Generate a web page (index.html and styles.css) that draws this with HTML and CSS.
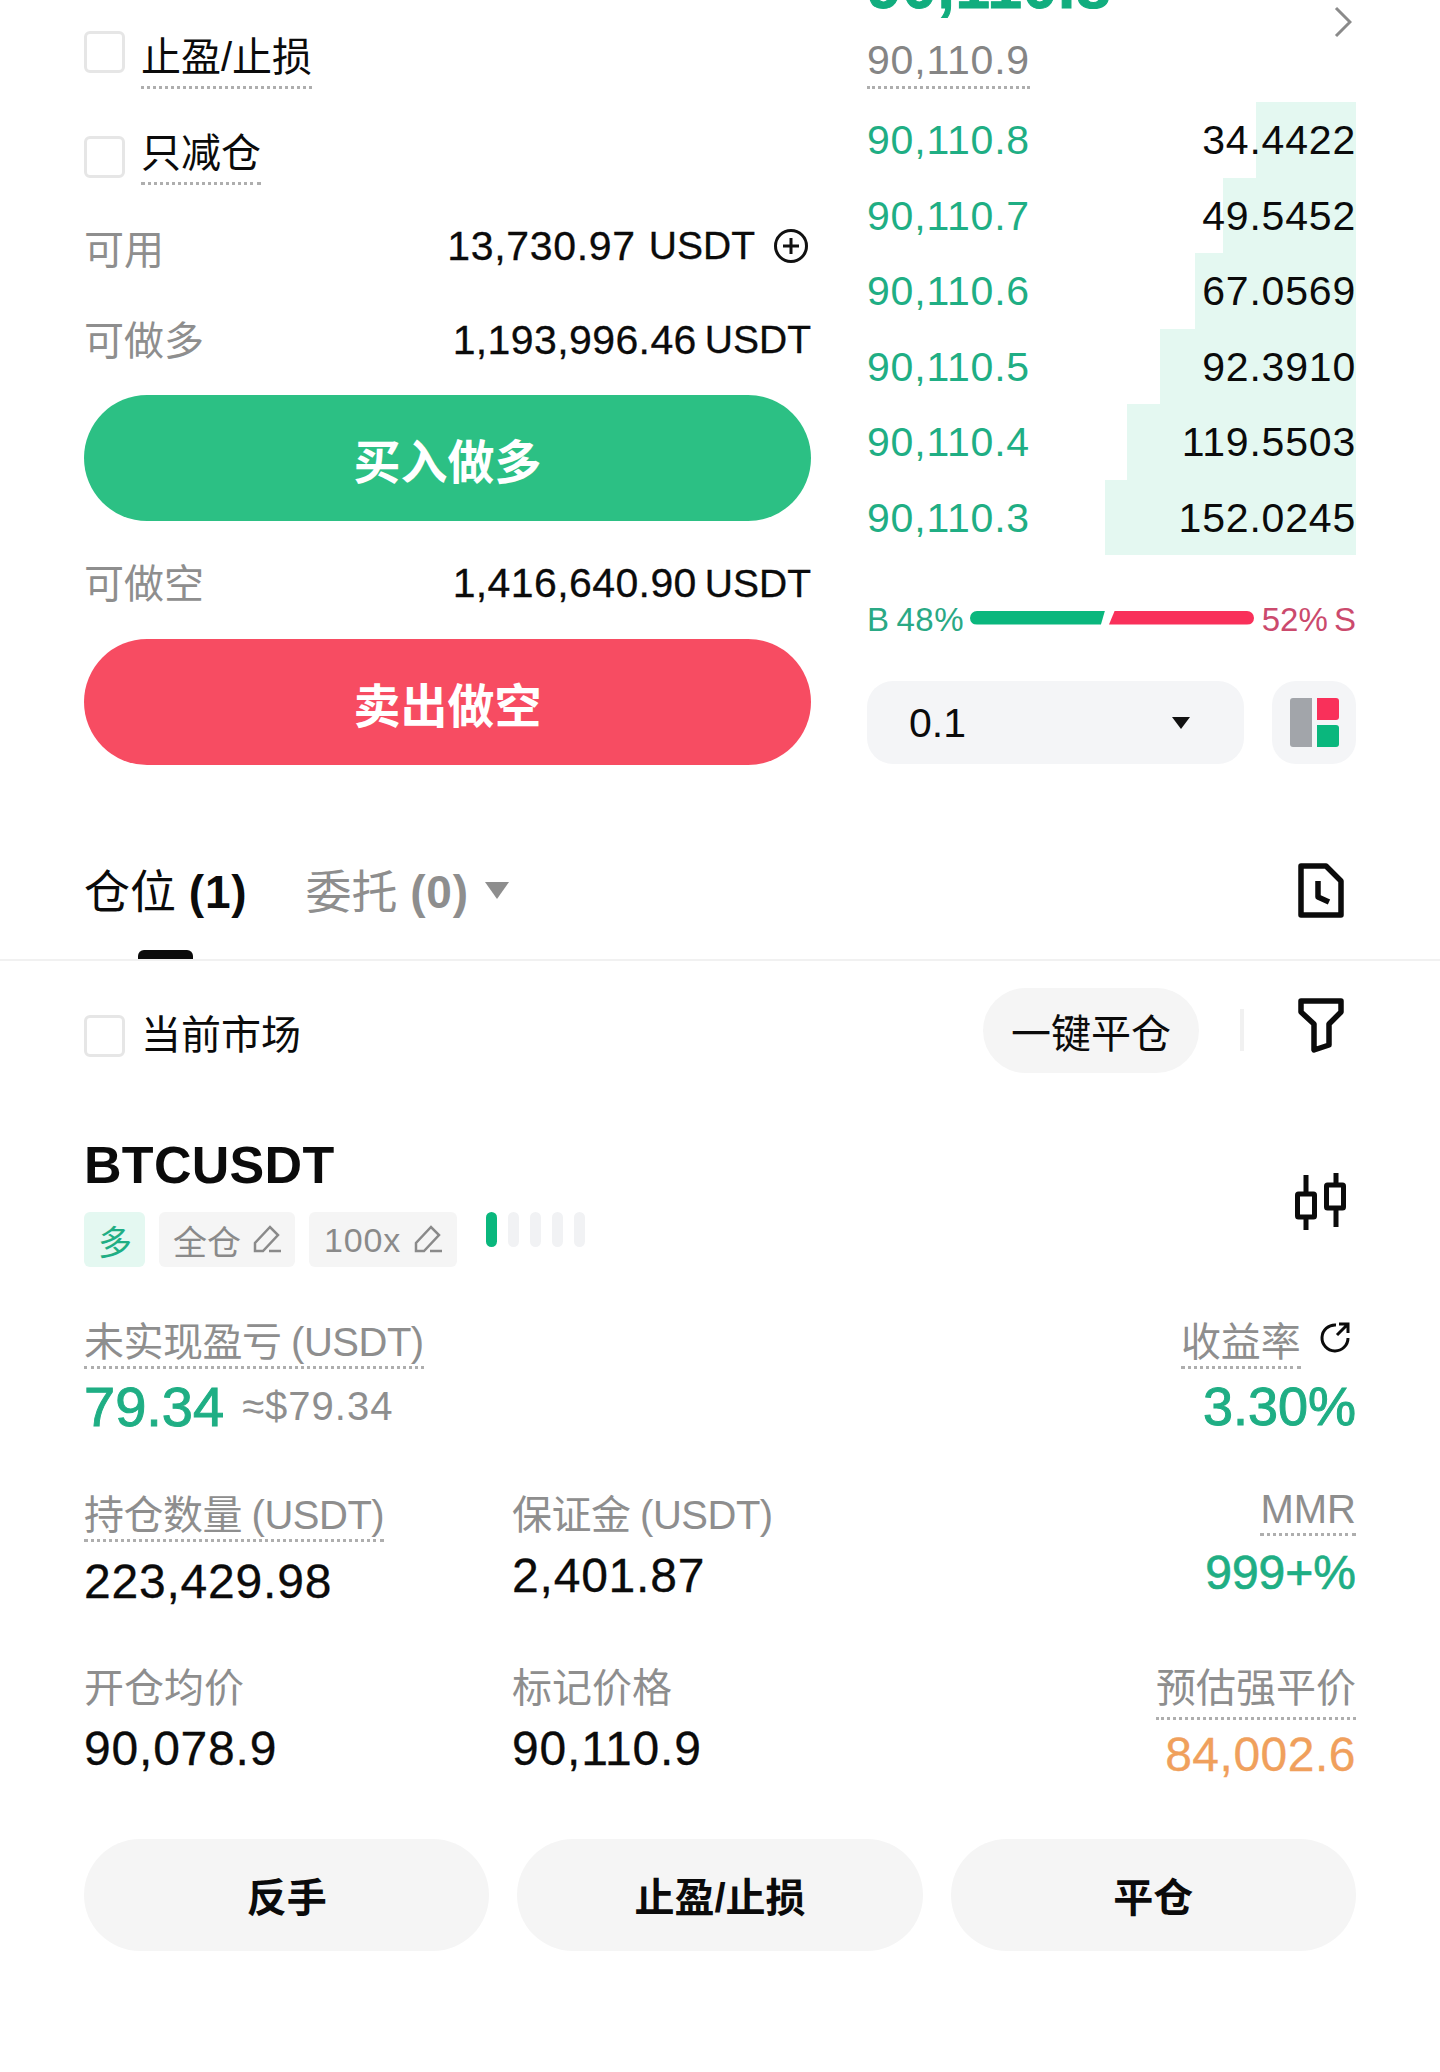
FILE: index.html
```html
<!DOCTYPE html>
<html lang="zh-CN">
<head>
	<meta charset="utf-8">
	<title>BTCUSDT</title>
	<link rel="stylesheet" href="styles.css">
</head>
<body>
	<div class="page">
		<!-- order form and order book -->
		<section class="top">
			<div class="form">
				<div class="form-row form-row--check">
					<span class="check check--up"></span>
					<span class="dotted">止盈/止损</span>
				</div>
				<div class="form-row form-row--check">
					<span class="check check--down"></span>
					<span class="dotted">只减仓</span>
				</div>
				<div class="form-row form-row--avail">
					<span class="muted">可用</span>
					<span class="amount amount--plus">
						<span class="num">13,730.97</span>
						<span class="unit">USDT</span>
						<svg class="plus" viewBox="0 0 34 34"><circle cx="17" cy="17" r="15.5"/><path d="M17 9v16M9 17h16"/></svg>
					</span>
				</div>
				<div class="form-row form-row--long">
					<span class="muted">可做多</span>
					<span class="amount"><span class="num">1,193,996.46</span><span class="unit">USDT</span></span>
				</div>
				<button class="trade trade--buy">买入做多</button>
				<div class="form-row form-row--short">
					<span class="muted">可做空</span>
					<span class="amount"><span class="num">1,416,640.90</span><span class="unit">USDT</span></span>
				</div>
				<button class="trade trade--sell">卖出做空</button>
			</div>

			<div class="book">
				<div class="book-head">
					<div class="last-price">90,110.8</div>
					<svg class="chevron" viewBox="0 0 18 32"><path d="M2 2l14 14L2 30"/></svg>
					<span class="mark-price dotted">90,110.9</span>
				</div>
				<div class="book-row"><i class="depth" style="width:100px"></i><span class="book-price">90,110.8</span><span class="book-size">34.4422</span></div>
				<div class="book-row"><i class="depth" style="width:133px"></i><span class="book-price">90,110.7</span><span class="book-size">49.5452</span></div>
				<div class="book-row"><i class="depth" style="width:161px"></i><span class="book-price">90,110.6</span><span class="book-size">67.0569</span></div>
				<div class="book-row"><i class="depth" style="width:196px"></i><span class="book-price">90,110.5</span><span class="book-size">92.3910</span></div>
				<div class="book-row"><i class="depth" style="width:229px"></i><span class="book-price">90,110.4</span><span class="book-size">119.5503</span></div>
				<div class="book-row"><i class="depth" style="width:251px"></i><span class="book-price">90,110.3</span><span class="book-size">152.0245</span></div>

				<div class="ratio">
					<span class="ratio-buy">B 48%</span>
					<span class="ratio-bar ratio-bar--buy"></span>
					<span class="ratio-bar ratio-bar--sell"></span>
					<span class="ratio-sell">52% S</span>
				</div>

				<div class="book-tools">
					<div class="tick">0.1<span class="tick-caret"></span></div>
					<div class="layout-btn">
						<span class="layout-gray"></span>
						<span class="layout-stack"><i class="layout-red"></i><i class="layout-green"></i></span>
					</div>
				</div>
			</div>
		</section>

		<!-- tabs -->
		<nav class="tabs">
			<span class="tab tab--on">仓位 <b>(1)</b></span>
			<span class="tab">委托 <b>(0)</b></span>
			<span class="tab-caret"></span>
			<svg class="doc-icon" viewBox="0 0 46 55"><path d="M3 3h25l15 15v34H3z"/><path d="M20 18v16l11 5"/></svg>
		</nav>

		<div class="tools">
			<span class="check tools-check"></span>
			<span class="tools-label">当前市场</span>
			<span class="pill">一键平仓</span>
			<span class="tools-sep"></span>
			<svg class="filter-icon" viewBox="0 0 46 55"><path d="M3 3h40v11L31 26v21l-15 5V26L3 14z"/></svg>
		</div>

		<!-- position card -->
		<section class="position">
			<div class="pos-head">
				<div>
					<h2 class="symbol">BTCUSDT</h2>
					<div class="tags">
						<span class="tag tag--long">多</span>
						<span class="tag">全仓
							<svg class="pen" viewBox="0 0 30 30"><path d="M3 27v-8L18 3l8 8L11 27zM17 27h12"/></svg>
						</span>
						<span class="tag tag--lev">100x
							<svg class="pen" viewBox="0 0 30 30"><path d="M3 27v-8L18 3l8 8L11 27zM17 27h12"/></svg>
						</span>
						<span class="lever">
							<i class="lever-on"></i><i></i><i></i><i></i><i></i>
						</span>
					</div>
				</div>
				<svg class="candle-icon" viewBox="0 0 52 57"><path d="M11 2v55M41 0v54"/><rect x="2.500" y="21" width="17" height="23" rx="1"/><rect x="31.500" y="12" width="17" height="23" rx="1"/></svg>
			</div>

			<div class="pnl">
				<div>
					<span class="label label--unit dotted">未实现盈亏 (USDT)</span>
					<div class="pnl-value"><strong class="green">79.34</strong> <span class="muted pnl-usd">≈$79.34</span></div>
				</div>
				<div class="right">
					<span class="label dotted">收益率</span>
					<svg class="share-icon" viewBox="0 0 32 32"><path d="M17 4A13 13 0 1 0 29 17M18 14L29 3M20 3h9v9"/></svg>
					<div class="pnl-rate green">3.30%</div>
				</div>
			</div>

			<div class="stats stats--first">
				<div>
					<span class="label label--unit dotted">持仓数量 (USDT)</span>
					<div class="value value--drop">223,429.98</div>
				</div>
				<div>
					<span class="label label--unit">保证金 (USDT)</span>
					<div class="value value--mid">2,401.87</div>
				</div>
				<div class="right stat-up">
					<span class="label dotted">MMR</span>
					<div class="value value--mid value--mmr green">999+%</div>
				</div>
			</div>

			<div class="stats stats--second">
				<div>
					<span class="label">开仓均价</span>
					<div class="value value--low">90,078.9</div>
				</div>
				<div>
					<span class="label">标记价格</span>
					<div class="value value--low">90,110.9</div>
				</div>
				<div class="right">
					<span class="label dotted label--gap">预估强平价</span>
					<div class="value value--liq orange">84,002.6</div>
				</div>
			</div>

			<div class="actions">
				<button class="action">反手</button>
				<button class="action">止盈/止损</button>
				<button class="action">平仓</button>
			</div>
		</section>
	</div>
</body>
</html>
```

FILE: styles.css
```css
* {
	margin: 0;
	padding: 0;
	box-sizing: border-box;
}
body {
	background: #fff;
	color: #0b0b0b;
	font-family: "Liberation Sans", "Noto Sans CJK SC", sans-serif;
	font-size: 40px;
}
button {
	border: none;
	font-family: inherit;
}
.page {
	width: 1440px;
	height: 2072px;
	overflow: hidden;
}
.muted {
	color: #8e8e8e;
}
.green {
	color: #1fae84;
}
.orange {
	color: #f0a05c;
}
.right {
	text-align: right;
}
.dotted {
	display: inline-block;
	border-bottom: 3px dotted #aeaeae;
}
.check {
	display: block;
	flex: none;
	width: 41px;
	height: 42px;
	border: 3px solid #e6e6e6;
	border-radius: 6px;
}

/* top part */
.top {
	display: flex;
	justify-content: space-between;
	height: 840px;
	padding: 9px 84px 0;
}
.form {
	width: 727px;
}
.form-row {
	display: flex;
	align-items: center;
	justify-content: space-between;
}
.form-row--check {
	justify-content: flex-start;
	gap: 16px;
	height: 96px;
}
.form-row--check .dotted {
	line-height: 50px;
	padding-bottom: 4px;
	margin-top: 7px;
}
.check--up {
	margin-top: -10px;
}
.check--down {
	margin-top: 8px;
}
.form-row--avail {
	height: 94px;
}
.form-row--long {
	height: 90px;
}
.form-row--short {
	height: 118px;
	padding-top: 7px;
}
.form-row--long .muted,
.form-row--short .muted {
	margin-top: -5px;
}
.form-row--avail .muted {
	margin-top: -2px;
}
.amount {
	display: flex;
	align-items: center;
	gap: 8px;
	font-size: 41px;
	white-space: nowrap;
	-webkit-text-stroke: .3px #0b0b0b;
}
.amount--plus {
	gap: 13px;
	margin-top: -4px;
}
.amount--plus .num {
	letter-spacing: .7px;
}
.num {
	letter-spacing: .4px;
}
.unit {
	font-size: 39px;
}
.plus {
	width: 34px;
	height: 34px;
	margin-left: 6px;
	margin-right: 3px;
	fill: none;
	stroke: #111;
	stroke-width: 3;
}
.trade {
	display: block;
	width: 100%;
	height: 126px;
	margin-top: 10px;
	border-radius: 63px;
	color: #fff;
	font-size: 47px;
	font-weight: 700;
}
.trade--buy {
	background: #2cc084;
}
.trade--sell {
	margin-top: 0;
	background: #f74c62;
}

/* order book */
.book {
	width: 489px;
	margin-top: -9px;
}
.book-head {
	position: relative;
	height: 102px;
}
.last-price {
	position: absolute;
	left: 0;
	top: -44px;
	font-size: 62px;
	font-weight: 700;
	line-height: 62px;
	letter-spacing: .8px;
	color: #11ad7e;
	-webkit-text-stroke: 1px #11ad7e;
}
.chevron {
	position: absolute;
	right: 4px;
	top: 6px;
	width: 18px;
	height: 32px;
	fill: none;
	stroke: #8a8a8a;
	stroke-width: 3;
}
.mark-price {
	position: absolute;
	left: 0;
	top: 36px;
	line-height: 48px;
	padding-bottom: 2px;
	color: #858585;
	font-size: 41px;
	letter-spacing: .8px;
}
.book-row {
	position: relative;
	display: flex;
	align-items: center;
	justify-content: space-between;
	height: 75.500px;
	padding-top: 2px;
	font-size: 41px;
	letter-spacing: .8px;
}
.depth {
	position: absolute;
	right: 0;
	top: 0;
	bottom: 0;
	background: #e4f8f1;
}
.book-price {
	position: relative;
	color: #1fae84;
}
.book-size {
	position: relative;
}
.ratio {
	display: flex;
	align-items: center;
	height: 31px;
	margin-top: 47px;
	font-size: 33px;
	word-spacing: -3px;
}
.ratio-buy {
	width: 103px;
	margin-top: 4px;
	letter-spacing: .6px;
	color: #2aa985;
}
.ratio-sell {
	margin-left: auto;
	margin-top: 4px;
	color: #cb4a6d;
}
.ratio-bar {
	height: 14px;
}
.ratio-bar--buy {
	width: 135px;
	background: #0ab77d;
	border-radius: 7px 0 0 7px;
	clip-path: polygon(0 0, 100% 0, 97% 100%, 0 100%);
}
.ratio-bar--sell {
	width: 145px;
	margin-left: 4px;
	background: #f9305a;
	border-radius: 0 7px 7px 0;
	clip-path: polygon(4% 0, 100% 0, 100% 100%, 0 100%);
}
.book-tools {
	display: flex;
	justify-content: space-between;
	height: 83px;
	margin-top: 48px;
}
.tick {
	position: relative;
	display: flex;
	align-items: center;
	width: 377px;
	padding: 2px 0 0 42px;
	background: #f4f5f7;
	border-radius: 26px;
	font-size: 41px;
}
.tick-caret {
	position: absolute;
	left: 305px;
	top: 36px;
	border-left: 9px solid transparent;
	border-right: 9px solid transparent;
	border-top: 12px solid #111;
}
.layout-btn {
	display: flex;
	align-items: center;
	justify-content: center;
	gap: 5px;
	width: 84px;
	background: #f4f5f7;
	border-radius: 24px;
}
.layout-gray {
	width: 22px;
	height: 49px;
	background: #a2a5aa;
	border-radius: 3px 0 0 3px;
}
.layout-stack {
	display: flex;
	flex-direction: column;
	gap: 5px;
}
.layout-red,
.layout-green {
	display: block;
	width: 22px;
	height: 22px;
	border-radius: 0 3px 3px 0;
}
.layout-red {
	background: #f9305a;
}
.layout-green {
	background: #0ab77d;
}

/* tabs */
.tabs {
	position: relative;
	display: flex;
	align-items: center;
	height: 121px;
	padding: 0 96px 23px 84px;
	border-bottom: 2px solid #f1f1f1;
	font-size: 46px;
}
.tab {
	color: #8e8e8e;
	margin-left: 58px;
	white-space: nowrap;
}
.tab b {
	font-weight: 700;
	letter-spacing: .8px;
}
.tab--on {
	margin-left: 0;
	color: #0b0b0b;
}
.tab--on::after {
	content: "";
	position: absolute;
	left: 138px;
	bottom: 0;
	width: 55px;
	height: 9px;
	background: #0b0b0b;
	border-radius: 6px 6px 0 0;
}
.tab-caret {
	margin: 5px 0 0 16px;
	border-left: 12.500px solid transparent;
	border-right: 12.500px solid transparent;
	border-top: 17px solid #8e8e8e;
}
.doc-icon {
	width: 46px;
	height: 55px;
	margin-left: auto;
	margin-top: 5px;
	fill: none;
	stroke: #0b0b0b;
	stroke-width: 5.500;
	stroke-linejoin: round;
}

.tools {
	display: flex;
	align-items: center;
	height: 174px;
	padding: 0 96px 36px 84px;
}
.tools-check {
	margin-top: 12px;
}
.tools-label {
	margin: 4px 0 0 16px;
}
.pill {
	margin-left: auto;
	width: 216px;
	height: 85px;
	padding-top: 8px;
	line-height: 77px;
	background: #f5f5f5;
	border-radius: 43px;
	text-align: center;
}
.tools-sep {
	width: 4px;
	height: 42px;
	margin: 0 54px 0 41px;
	background: #f1f1f1;
}
.filter-icon {
	width: 46px;
	height: 55px;
	margin-top: -10px;
	fill: none;
	stroke: #0b0b0b;
	stroke-width: 5.500;
	stroke-linejoin: round;
}

/* position card */
.position {
	padding: 0 84px;
}
.pos-head {
	display: flex;
	align-items: center;
	justify-content: space-between;
	padding-right: 9px;
}
.symbol {
	font-size: 52px;
	line-height: 60px;
	font-weight: 700;
	letter-spacing: .3px;
}
.tags {
	display: flex;
	gap: 14px;
	margin-top: 17px;
}
.tag {
	display: flex;
	align-items: center;
	gap: 11px;
	height: 55px;
	padding: 2px 13px 0 14px;
	background: #f5f5f5;
	border-radius: 6px;
	color: #8a8a8a;
	font-size: 34px;
}
.tag--lev {
	gap: 12px;
	letter-spacing: .8px;
	padding-left: 15px;
	padding-right: 14px;
}
.tag--long {
	background: #e4f8f1;
	color: #1fae84;
}
.pen {
	width: 30px;
	height: 30px;
	margin-top: -3px;
	fill: none;
	stroke: #8a8a8a;
	stroke-width: 2.500;
}
.lever {
	display: flex;
	gap: 11px;
	margin-left: 15px;
}
.lever i {
	width: 11px;
	height: 35px;
	background: #f1f2f4;
	border-radius: 6px;
}
.lever .lever-on {
	background: #0ab77d;
}
.candle-icon {
	width: 52px;
	height: 57px;
	fill: #fff;
	stroke: #0b0b0b;
	stroke-width: 5;
}
.candle-icon rect {
	stroke-linejoin: round;
}
.label {
	color: #8e8e8e;
	line-height: 48px;
	font-size: 40px;
}
.label--unit {
	letter-spacing: -.5px;
	word-spacing: -1px;
}
.label--gap {
	padding-bottom: 5px;
}
.pnl {
	display: flex;
	justify-content: space-between;
	margin-top: 51px;
}
.pnl-value {
	display: flex;
	align-items: center;
	gap: 16px;
	height: 60px;
	margin-top: 7px;
}
.pnl-value strong {
	font-size: 56px;
	font-weight: 400;
	-webkit-text-stroke: 1px #1fae84;
}
.pnl-usd {
	margin-left: 2px;
	letter-spacing: 1px;
}
.pnl-rate {
	height: 60px;
	line-height: 60px;
	margin-top: 7px;
	font-size: 54px;
	-webkit-text-stroke: 1px #1fae84;
}
.share-icon {
	width: 32px;
	height: 32px;
	margin-left: 7px;
	margin-right: 5px;
	vertical-align: 3px;
	fill: none;
	stroke: #0b0b0b;
	stroke-width: 3;
}
.stats {
	display: grid;
	grid-template-columns: 428px 1fr auto;
}
.stats--first {
	margin-top: 55px;
}
.stats--second {
	margin-top: 54px;
}
.stat-up {
	margin-top: -6px;
}
.value {
	font-size: 48px;
	line-height: 56px;
	margin-top: 6px;
	letter-spacing: .8px;
	-webkit-text-stroke: .3px currentColor;
}
.value--drop {
	margin-top: 12px;
}
.value--mid {
	margin-top: 9px;
}
.value--mmr {
	letter-spacing: 0;
	-webkit-text-stroke: .7px currentColor;
}
.value--low {
	margin-top: 9px;
}
.value--liq {
	margin-top: 7px;
	letter-spacing: .5px;
}
.actions {
	display: flex;
	gap: 28px;
	margin-top: 56px;
}
.action {
	flex: 1;
	height: 112px;
	background: #f5f5f5;
	border-radius: 56px;
	color: #0b0b0b;
	font-size: 40px;
	font-weight: 700;
}
```
